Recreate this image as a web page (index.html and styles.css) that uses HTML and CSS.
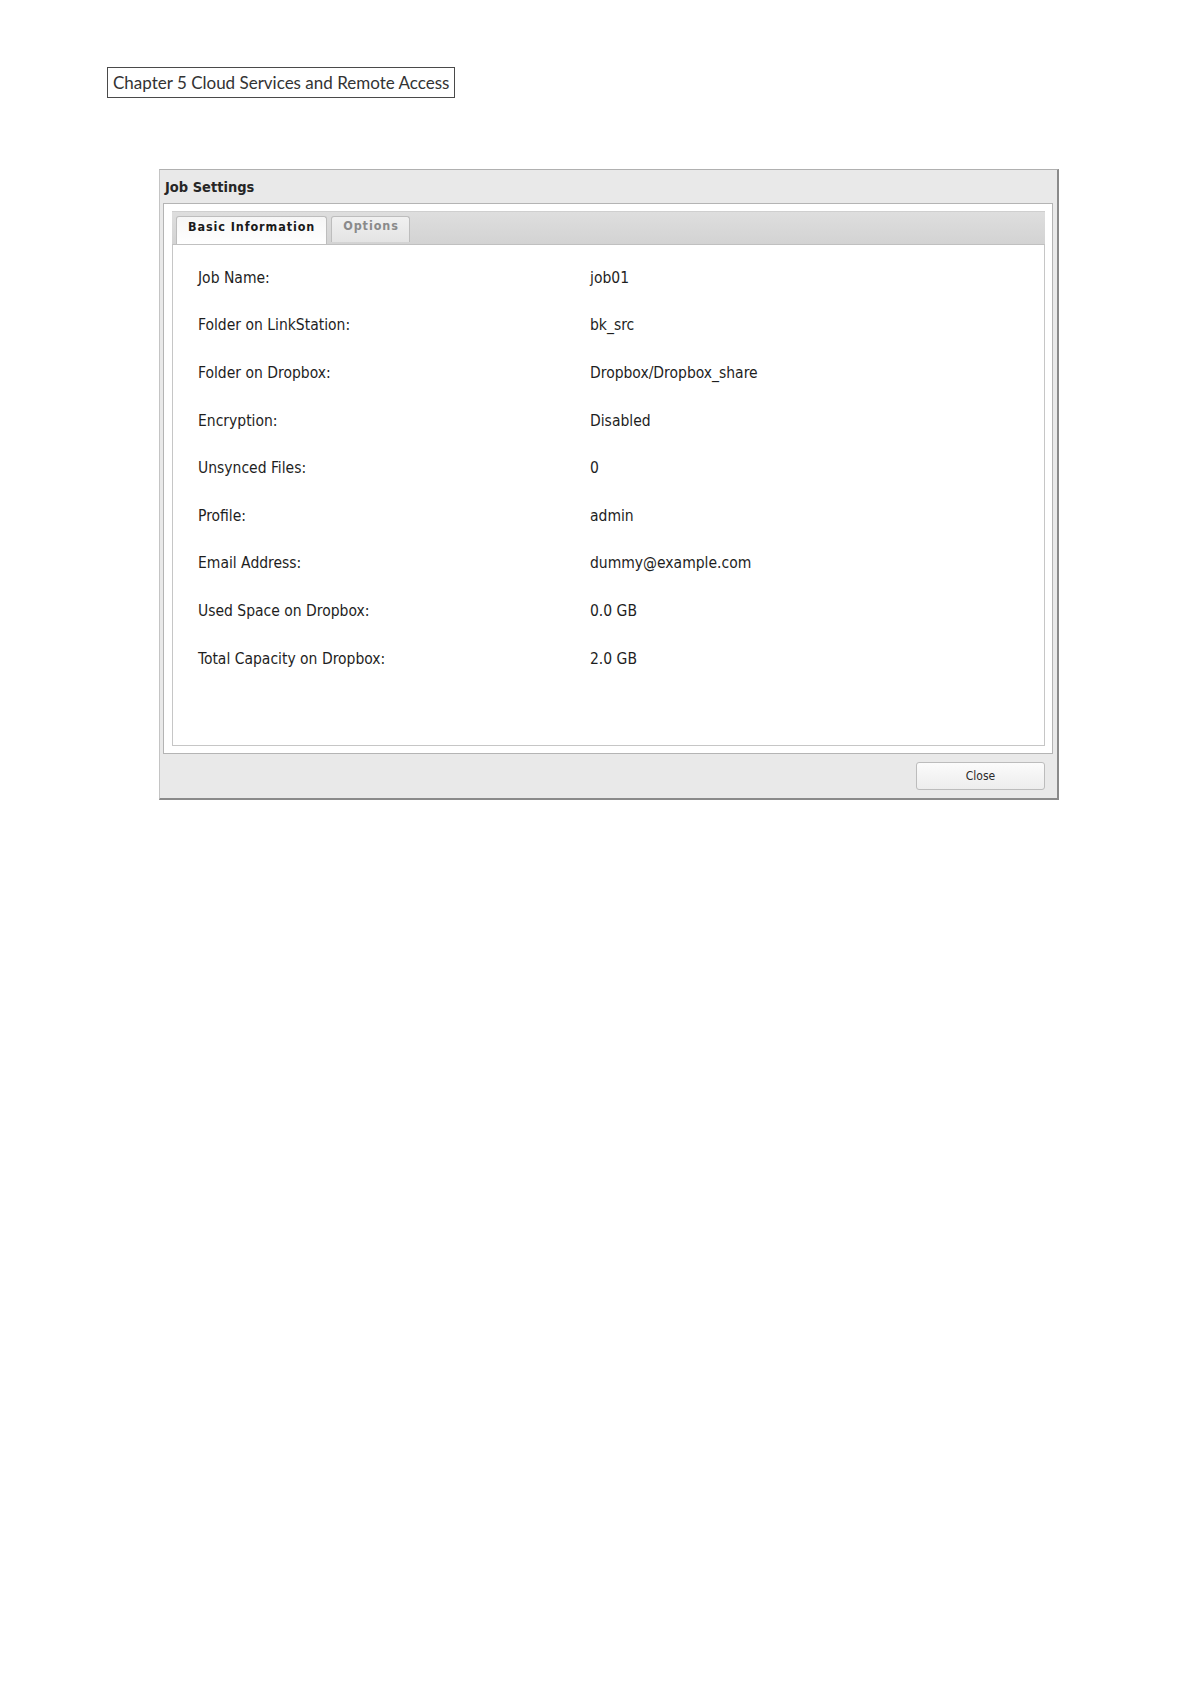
FILE: index.html
```html
<!DOCTYPE html>
<html>
<head>
<meta charset="utf-8">
<link rel="stylesheet" href="styles.css">
</head>
<body>
<div class="chapter">Chapter 5 Cloud Services and Remote Access</div>
<div class="dialog">
  <div class="dialog-title">Job Settings</div>
  <div class="panel">
    <div class="tabstrip">
      <div class="tab active">Basic Information</div>
      <div class="tab">Options</div>
    </div>
    <div class="content">
      <div class="row"><div class="label">Job Name:</div><div class="value">job01</div></div>
      <div class="row"><div class="label">Folder on LinkStation:</div><div class="value">bk_src</div></div>
      <div class="row"><div class="label">Folder on Dropbox:</div><div class="value">Dropbox/Dropbox_share</div></div>
      <div class="row"><div class="label">Encryption:</div><div class="value">Disabled</div></div>
      <div class="row"><div class="label">Unsynced Files:</div><div class="value">0</div></div>
      <div class="row"><div class="label">Profile:</div><div class="value">admin</div></div>
      <div class="row"><div class="label">Email Address:</div><div class="value">dummy@example.com</div></div>
      <div class="row"><div class="label">Used Space on Dropbox:</div><div class="value">0.0 GB</div></div>
      <div class="row"><div class="label">Total Capacity on Dropbox:</div><div class="value">2.0 GB</div></div>
    </div>
  </div>
  <div class="footer">
    <div class="button">Close</div>
  </div>
</div>
</body>
</html>
```

FILE: styles.css
```css
html, body {
  margin: 0;
  padding: 0;
  background: #ffffff;
}
body {
  width: 1191px;
  height: 1684px;
  padding-top: 67px;
  box-sizing: border-box;
}
.chapter {
  margin-left: 107px;
  display: inline-block;
  height: 31px;
  box-sizing: border-box;
  border: 1px solid #4a4a4a;
  padding: 0 5px;
  font-family: Lato, "Open Sans", sans-serif;
  font-size: 17px;
  line-height: 29px;
  color: #333333;
}
.dialog {
  margin-left: 159px;
  margin-top: 71px;
  width: 900px;
  height: 631px;
  box-sizing: border-box;
  background: #e9e9e9;
  border-top: 1px solid #b0b0b0;
  border-left: 1px solid #c4c4c4;
  border-right: 2px solid #8a8a8a;
  border-bottom: 2px solid #8a8a8a;
  display: flex;
  flex-direction: column;
  font-family: "DejaVu Sans Condensed", "DejaVu Sans", sans-serif;
  color: #1e1e1e;
}
.dialog-title {
  height: 33px;
  padding-left: 5px;
  font-weight: bold;
  font-size: 14.5px;
  line-height: 34px;
  color: #262626;
}
.panel {
  margin-left: 3px;
  margin-right: 4px;
  height: 551px;
  box-sizing: border-box;
  border: 1px solid #b4b4b4;
  background: #ffffff;
  padding: 7px 7px 7px 8px;
  display: flex;
  flex-direction: column;
}
.tabstrip {
  height: 33px;
  box-sizing: border-box;
  background: linear-gradient(#dedede, #d3d3d3);
  border-top: 1px solid #cfcfcf;
  display: flex;
  align-items: flex-end;
  gap: 4px;
  padding-left: 4px;
}
.tab {
  height: 26px;
  box-sizing: border-box;
  border: 1px solid #bdbdbd;
  border-bottom: none;
  border-radius: 3px 3px 0 0;
  background: linear-gradient(#f0f0f0, #e4e4e4);
  color: #8a8a8a;
  font-weight: bold;
  font-size: 12.5px;
  letter-spacing: 0.9px;
  line-height: 18px;
  padding: 0 10px 0 11px;
  margin-bottom: 2px;
}
.tab.active {
  height: 29px;
  margin-bottom: -1px;
  background: linear-gradient(#f6f6f6, #ffffff);
  color: #1a1a1a;
  padding: 0 11px 0 11px;
  line-height: 20px;
}
.content {
  flex: 1;
  box-sizing: border-box;
  border: 1px solid #c6c6c6;
  border-top-color: #c0c0c0;
  padding: 9px 0 0 25px;
  display: flex;
  flex-direction: column;
}
.row {
  display: flex;
  height: 47.6px;
  align-items: center;
  font-size: 15.5px;
}
.label {
  width: 392px;
}
.value {
  flex: 1;
}
.footer {
  flex: 1;
  display: flex;
  justify-content: flex-end;
  align-items: flex-start;
  padding-top: 8px;
  padding-right: 12px;
}
.button {
  width: 129px;
  height: 28px;
  box-sizing: border-box;
  border: 1px solid #bcbcbc;
  border-radius: 3px;
  background: linear-gradient(#fbfbfb, #ededed);
  text-align: center;
  font-size: 12px;
  line-height: 26px;
  color: #2a2a2a;
}
```
